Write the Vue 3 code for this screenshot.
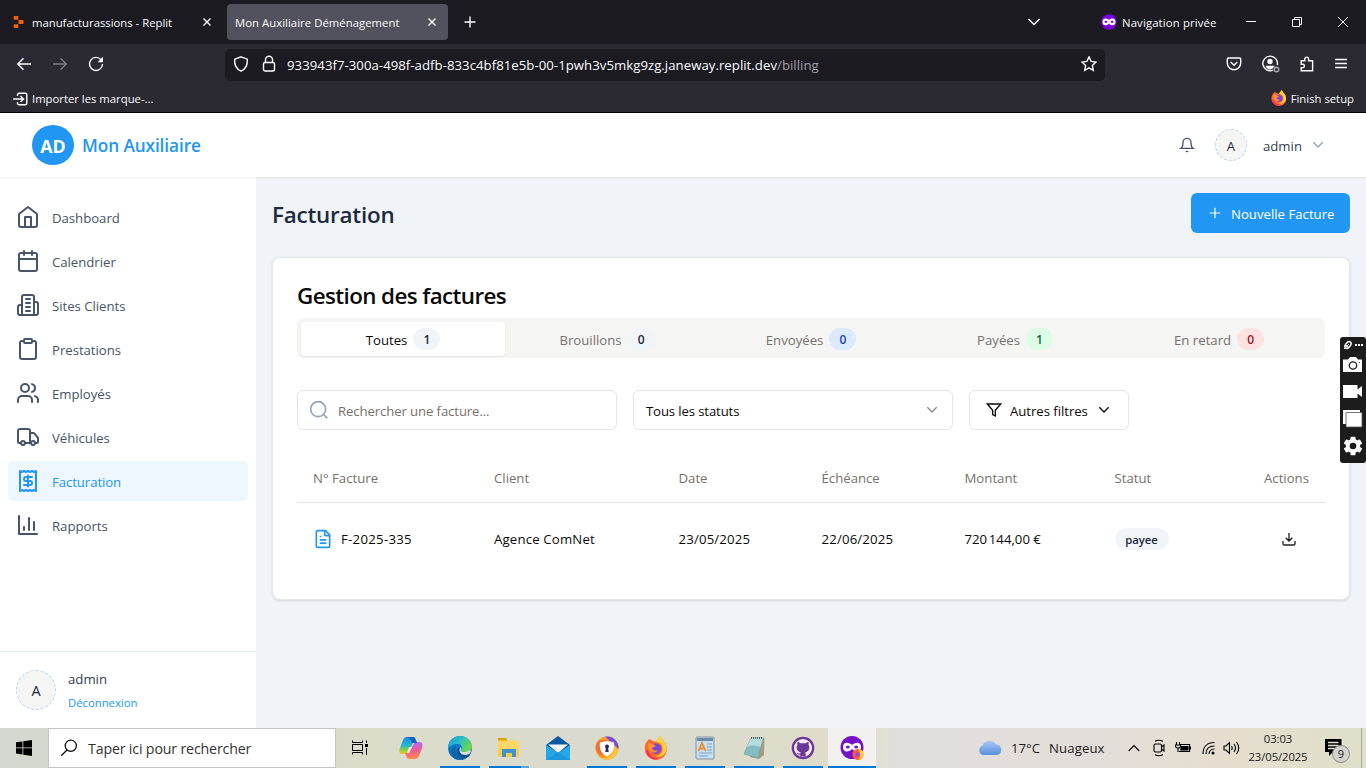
<script setup>
const nav = [
  { label: 'Dashboard', icon: ['m3 9 9-7 9 7v11a2 2 0 0 1-2 2H5a2 2 0 0 1-2-2z', 'M9 22V12h6v10'] },
  { label: 'Calendrier', icon: ['M5 4h14a2 2 0 0 1 2 2v14a2 2 0 0 1-2 2H5a2 2 0 0 1-2-2V6a2 2 0 0 1 2-2z', 'M16 2v4M8 2v4M3 10h18'] },
  { label: 'Sites Clients', icon: ['M6 22V4a2 2 0 0 1 2-2h8a2 2 0 0 1 2 2v18Z', 'M6 12H4a2 2 0 0 0-2 2v6a2 2 0 0 0 2 2h2', 'M18 9h2a2 2 0 0 1 2 2v9a2 2 0 0 1-2 2h-2', 'M10 6h4M10 10h4M10 14h4M10 18h4'] },
  { label: 'Prestations', icon: ['M9 2h6a1 1 0 0 1 1 1v2a1 1 0 0 1-1 1H9a1 1 0 0 1-1-1V3a1 1 0 0 1 1-1z', 'M16 4h2a2 2 0 0 1 2 2v14a2 2 0 0 1-2 2H6a2 2 0 0 1-2-2V6a2 2 0 0 1 2-2h2'] },
  { label: 'Employés', icon: ['M16 21v-2a4 4 0 0 0-4-4H6a4 4 0 0 0-4 4v2', 'M5 7a4 4 0 1 0 8 0a4 4 0 1 0-8 0', 'M22 21v-2a4 4 0 0 0-3-3.87', 'M16 3.13a4 4 0 0 1 0 7.75'] },
  { label: 'Véhicules', icon: ['M14 18V6a2 2 0 0 0-2-2H4a2 2 0 0 0-2 2v11a1 1 0 0 0 1 1h2', 'M15 18H9', 'M19 18h2a1 1 0 0 0 1-1v-3.65a1 1 0 0 0-.22-.624l-3.48-4.35A1 1 0 0 0 17.52 8H14', 'M5 18a2 2 0 1 0 4 0a2 2 0 1 0-4 0', 'M15 18a2 2 0 1 0 4 0a2 2 0 1 0-4 0'] },
  { label: 'Facturation', active: true, icon: ['M4 2v20l2-1 2 1 2-1 2 1 2-1 2 1 2-1 2 1V2l-2 1-2-1-2 1-2-1-2 1-2-1-2 1Z', 'M16 8h-6a2 2 0 1 0 0 4h4a2 2 0 1 1 0 4H8', 'M12 17.5v-11'] },
  { label: 'Rapports', icon: ['M3 3v18h18', 'M18 17V9M13 17V5M8 17v-3'] },
]
const tabs = [
  { label: 'Toutes', n: 1, tone: 'slate', on: true },
  { label: 'Brouillons', n: 0, tone: 'slate' },
  { label: 'Envoyées', n: 0, tone: 'blue' },
  { label: 'Payées', n: 1, tone: 'green' },
  { label: 'En retard', n: 0, tone: 'red' },
]
const columns = ['N° Facture', 'Client', 'Date', 'Échéance', 'Montant', 'Statut', 'Actions']
</script>

<template>
  <div class="screen">
    <header class="browser">
      <div class="tabstrip">
        <div class="btab first">
          <svg class="replit" width="12" height="12" viewBox="0 0 12 12"><path d="M1.500 0h3.800v3.800H1.500a.8.8 0 0 1-.8-.8V.8a.8.8 0 0 1 .8-.8zM5.500 4h4.200a.8.8 0 0 1 .8.8v2.400a.8.8 0 0 1-.8.8H5.500zM1.500 8.200h3.800V12H1.500a.8.8 0 0 1-.8-.8V9a.8.8 0 0 1 .8-.8z" /></svg>
          <span class="t-rep">manufacturassions - Replit</span>
          <svg class="x" width="10" height="10" viewBox="0 0 10 10"><path d="M1.500 1.500l7 7M8.500 1.500l-7 7" /></svg>
        </div>
        <div class="btab current">
          <span class="t-mon">Mon Auxiliaire Déménagement</span>
          <svg class="x" width="10" height="10" viewBox="0 0 10 10"><path d="M1.500 1.500l7 7M8.500 1.500l-7 7" /></svg>
        </div>
        <svg class="plus" width="12" height="12" viewBox="0 0 12 12"><path d="M6 .5v11M.5 6h11" /></svg>
        <div class="win">
          <svg class="chev" width="14" height="8" viewBox="0 0 14 8"><path d="M1.500 1L7 6.500 12.500 1" /></svg>
          <svg class="mask" width="16" height="16" viewBox="0 0 16 16"><circle cx="8" cy="8" r="7.800" fill="#7f00d6" /><path d="M1.500 7.700c0-4.500 5-3.200 6.500-1.800C9.500 4.500 14.500 3.200 14.500 7.700c0 4.800-5 4-6.500 1.700-1.500 2.300-6.500 3.100-6.500-1.700z" fill="#fff" /><ellipse cx="4.900" cy="7.800" rx="1.500" ry="1.100" fill="#7f00d6" /><ellipse cx="11.100" cy="7.800" rx="1.500" ry="1.100" fill="#7f00d6" /></svg>
          <span class="t-nav">Navigation privée</span>
          <svg class="wc" width="10" height="10" viewBox="0 0 10 10"><path d="M0 4.500h10" /></svg>
          <svg class="wc w2" width="10" height="10" viewBox="0 0 10 10"><path d="M.5 2.500h7v7h-7zM2.500 2.500v-2h7v7h-2" /></svg>
          <svg class="wc w3" width="10" height="10" viewBox="0 0 10 10"><path d="M0 0l10 10M10 0L0 10" /></svg>
        </div>
      </div>
      <div class="toolbar">
        <svg class="back" width="16" height="16" viewBox="0 0 16 16"><path d="M15 8H1.800M7.500 2.300L1.800 8l5.700 5.700" /></svg>
        <svg class="fwd" width="16" height="16" viewBox="0 0 16 16"><path d="M1 8h13.200M8.500 2.300L14.200 8l-5.700 5.700" /></svg>
        <svg class="reload" width="16" height="16" viewBox="0 0 16 16"><path d="M13.200 4A6.500 6.500 0 1 0 14.500 8" /><path d="M15 .8v5.400H9.600z" fill="#fbfbfe" stroke="none" /></svg>
        <div class="url">
          <svg width="16" height="16" viewBox="0 0 16 16"><path d="M8 .8l6.300 2.400c.4 5.500-1.600 9.800-6.300 12C3.300 13 1.300 8.700 1.700 3.200z" /></svg>
          <svg class="lock" width="14" height="18" viewBox="0 0 14 18"><path d="M3.500 7.500V4.700a3.500 3.500 0 0 1 7 0v2.800" /><rect x="1.500" y="7.500" width="11" height="8.500" rx="1.500" /></svg>
          <span class="addr">933943f7-300a-498f-adfb-833c4bf81e5b-00-1pwh3v5mkg9zg.janeway.replit.dev<i>/billing</i></span>
          <svg class="star" width="16" height="16" viewBox="0 0 16 16"><path d="M8 .9l2.100 4.500 4.900.6-3.600 3.400.9 4.900L8 11.900l-4.300 2.400.9-4.900L1 6l4.900-.6z" /></svg>
        </div>
        <div class="tools">
          <svg width="16" height="16" viewBox="0 0 16 16"><path d="M2.500 2h11a1.200 1.200 0 0 1 1.200 1.200V7a6.700 6.700 0 0 1-13.400 0V3.200A1.200 1.200 0 0 1 2.500 2z" /><path d="M4.700 6L8 9.200 11.300 6" /></svg>
          <svg width="19" height="18" viewBox="0 0 18 18"><path d="M11.500 15.200A7.300 7.300 0 1 1 15.800 10" /><circle cx="8.500" cy="6.500" r="2.700" fill="#fbfbfe" stroke="none" /><path d="M4 10.800h9c0 1-2 3.700-4.500 3.700S4 11.800 4 10.800z" fill="#fbfbfe" stroke="none" /><circle class="dot" cx="15" cy="14.500" r="2.200" /></svg>
          <svg width="16" height="16" viewBox="0 0 16 16"><path d="M2.200 4.700h3.600V3a1.900 1.900 0 0 1 3.800 0v1.700h4v10H2.200v-3h1.500a1.700 1.700 0 0 0 0-3.400H2.200z" /></svg>
          <svg width="14" height="16" viewBox="0 0 14 16"><path d="M1 3.500h12M1 7.500h12M1 11.500h12" /></svg>
        </div>
      </div>
      <div class="bookmarks">
        <svg class="imp" width="15" height="14" viewBox="0 0 15 14"><path d="M4.500 4V2.800A1.500 1.500 0 0 1 6 1.300h6.300a1.500 1.500 0 0 1 1.500 1.500v8.400a1.500 1.500 0 0 1-1.500 1.500H6a1.500 1.500 0 0 1-1.500-1.500V10M.2 7H10M7.500 4l3 3-3 3" /></svg>
        <span class="t-imp">Importer les marque-...</span>
        <svg class="ff" width="16" height="16" viewBox="0 0 24 24"><path d="M22 9c-.5-2-2-4-3.500-5-.5-2-2-3-3-4-.5 3-3 4-4 6L5 3 2 7C0 10 .5 16 3 19.500 8 26 18 25 21.500 18.500 23 16 23.300 12 22 9z" fill="#ff6a2b" /><path d="M18.500 4c-.5-2-2-3-3-4-.5 3-3 4-4 6 5 0 8 4 7 9-1 3-4 5-7 5 5 2 10-1 11-6 .5-4-1.500-8-4-10z" fill="#ffd43a" /><path d="M2 15c1 6 7 9.500 13 8-6-1-10-3-11-9z" fill="#f1246e" /><circle cx="12" cy="12.500" r="5.300" fill="#7b45dc" /><path d="M4 7l5 1 3 2-4 2c1 3 4 3 6 2-2 4-8 3-9.500-1z" fill="#ff912f" /></svg>
        <span class="t-fin">Finish setup</span>
      </div>
    </header>

    <div class="app">
      <header class="topbar">
        <div class="logo">AD</div>
        <span class="brand">Mon Auxiliaire</span>
        <div class="user">
          <svg class="bell" width="16" height="16" viewBox="0 0 24 24"><path d="M6 8a6 6 0 0 1 12 0c0 7 3 9 3 9H3s3-2 3-9" /><path d="M10.300 21a1.940 1.940 0 0 0 3.400 0" /></svg>
          <div class="avatar small">A</div>
          <span class="uname">admin</span>
          <svg class="down" width="16" height="16" viewBox="0 0 24 24"><path d="m5 8 7 7 7-7" /></svg>
        </div>
      </header>
      <div class="body">
        <aside>
          <nav>
            <a v-for="item in nav" :key="item.label" :class="{ active: item.active }">
              <svg width="24" height="24" viewBox="0 0 24 24"><path v-for="d in item.icon" :key="d" :d="d" /></svg>
              <span>{{ item.label }}</span>
            </a>
          </nav>
          <div class="account">
            <div class="avatar">A</div>
            <div class="who"><span>admin</span><a>Déconnexion</a></div>
          </div>
        </aside>
        <main>
          <div class="heading">
            <h1>Facturation</h1>
            <button><svg width="16" height="16" viewBox="0 0 24 24"><path d="M4 12h16M12 4v16" /></svg><span>Nouvelle Facture</span></button>
          </div>
          <section class="card">
            <h2>Gestion des factures</h2>
            <div class="tabs">
              <div v-for="t in tabs" :key="t.label" class="tab" :class="{ on: t.on }">
                <span>{{ t.label }}</span><b :class="t.tone">{{ t.n }}</b>
              </div>
            </div>
            <div class="filters">
              <div class="field search">
                <svg width="20" height="20" viewBox="0 0 24 24"><circle cx="11" cy="11" r="9" /><path d="m22 22-4.600-4.600" /></svg>
                <span>Rechercher une facture...</span>
              </div>
              <div class="field select">
                <span>Tous les statuts</span>
                <svg width="16" height="16" viewBox="0 0 24 24"><path d="m5 8 7 7 7-7" /></svg>
              </div>
              <div class="field more">
                <svg width="16" height="16" viewBox="0 0 24 24"><path d="M22 3H2l8 9.460V19l4 2v-8.540z" /></svg>
                <span>Autres filtres</span>
                <svg width="16" height="16" viewBox="0 0 24 24"><path d="m5 8 7 7 7-7" /></svg>
              </div>
            </div>
            <div class="row head"><span v-for="c in columns" :key="c">{{ c }}</span></div>
            <div class="row line">
              <span class="num"><svg width="20" height="20" viewBox="0 0 24 24"><path d="M15 2H6a2 2 0 0 0-2 2v16a2 2 0 0 0 2 2h12a2 2 0 0 0 2-2V7Z" /><path d="M14 2v4a2 2 0 0 0 2 2h4M10 9H8M16 13H8M16 17H8" /></svg>F-2025-335</span>
              <span>Agence ComNet</span>
              <span>23/05/2025</span>
              <span>22/06/2025</span>
              <span class="amount">720&#8239;144,00&nbsp;€</span>
              <span><b class="status">payee</b></span>
              <span class="act"><svg width="16" height="16" viewBox="0 0 24 24"><path d="M21 15v4a2 2 0 0 1-2 2H5a2 2 0 0 1-2-2v-4M7 10l5 5 5-5M12 15V3" /></svg></span>
            </div>
          </section>
        </main>
      </div>
    </div>

    <div class="capture">
      <svg width="26" height="126" viewBox="0 0 26 126">
        <g fill="none" stroke="#fff"><ellipse cx="8" cy="8" rx="2.300" ry="3.800" transform="rotate(40 8 8)" stroke-width="1.500" /><path d="M4 12l5-5M5 7.500l4 3" /></g>
        <path d="M15 7h2v2h-2zM18 7h2v2h-2zM21 7h2v2h-2z" fill="#fff" />
        <path d="M3 22.500h5l2-2.500h6l2 2.500h4V35H3z" fill="#fff" /><circle cx="13" cy="28.500" r="3.700" fill="#fff" stroke="#1c1c1c" stroke-width="1.300" /><path d="M19 25h1v1h-1z" fill="#333" />
        <path d="M3 48h14.500v4.500L22 49v11l-4.500-3.500V61H3z" fill="#fff" />
        <path d="M3 73h17v14H3z" fill="#fff" /><path d="M6 75.500h16V90H6z" fill="#fff" stroke="#555" stroke-width=".8" />
        <g transform="translate(13 109)" fill="#fff"><circle r="7.200" /><rect v-for="a in [0, 60, 120]" :key="a" x="-2.500" y="-9.300" width="5" height="18.600" :transform="`rotate(${a})`" rx=".8" /><circle r="3.300" fill="#1c1c1c" /></g>
      </svg>
    </div>

    <footer class="taskbar">
      <div class="start"><svg width="16" height="16" viewBox="0 0 16 16"><path d="M0 2.300L6.500 1.400v6.100H0zM7.300 1.300L16 0v7.500H7.300zM0 8.300h6.500v6.200L0 13.600zM7.300 8.300H16V16l-8.700-1.300z" /></svg></div>
      <div class="find">
        <svg width="18" height="18" viewBox="0 0 18 18"><circle cx="10.800" cy="6.800" r="5.600" /><path d="M7 11L1.200 16.800" /></svg>
        <span>Taper ici pour rechercher</span>
      </div>
      <div class="cell view"><svg width="18" height="18" viewBox="0 0 18 18"><path d="M1.500 1.500v2h10v-2M1.500 5.500h10v6h-10zM1.500 15.500v-2h10v2M15.500 1.500v2.500M15.500 9v7" fill="none" stroke="#000" stroke-width="1" /><path d="M14 5h3v3h-3z" fill="#000" /></svg></div>
      <div class="apps">
        <div class="cell">
          <svg width="24" height="24" viewBox="0 0 24 24"><defs><linearGradient id="ca" x1="0" y1="0" x2="0" y2="1"><stop stop-color="#138ae8" /><stop offset=".5" stop-color="#26b7ce" /><stop offset=".75" stop-color="#8acc4a" /><stop offset="1" stop-color="#f4ca22" /></linearGradient><linearGradient id="cb" x1="0" y1="0" x2="0" y2="1"><stop stop-color="#b76af2" /><stop offset=".5" stop-color="#ee5b93" /><stop offset="1" stop-color="#ff8a4b" /></linearGradient></defs><path d="M13 1l3 1 2 5h-4l-3 6-3 5H3c-3 0-3-3-2-6l3-8c1-2 2-3 4-3z" fill="url(#ca)" /><path d="M11 23l-3-1-2-5h4l3-6 3-5h4c4 0 4 3 3 6l-3 8c-1 2-2 3-4 3z" fill="url(#cb)" /><path d="M8 1h6c2 0 2 1 4 6h-5c-1-3-2-5-5-6z" fill="#1760c4" /><path d="M10 11h3l-3 6H8z" fill="#ecebe0" /></svg>
        </div>
        <div class="cell open">
          <svg width="26" height="26" viewBox="0 0 26 26"><defs><linearGradient id="ea" x1="0" y1="0" x2="1" y2=".4"><stop stop-color="#199bdc" /><stop offset=".5" stop-color="#28bccb" /><stop offset="1" stop-color="#68d653" /></linearGradient></defs><circle cx="13" cy="13" r="12" fill="#1077c7" /><path d="M1 12C2 5 7 1 13 1c7 0 12 5 12 10 0 4-3 6-7 6-3 0-4-1-4-2 2-2 1-6-3-6-5 0-9 2-10 5z" fill="url(#ea)" /><path d="M9 12c-2 7 3 12 10 11-6 4-13 1-15-4-1-5 2-8 5-7z" fill="#0d63ae" /><path d="M13 12c-3 3 0 9 9 7l1 1c-3 4-8 4-11 1-3-3-3-7 1-9z" fill="#124e94" /><path d="M14 12c1 3-1 3 0 4 2 2 6 1 9-1l1 1c-1 3-3 4-6 4-5 0-7-5-4-8z" fill="#ddddd4" /></svg>
        </div>
        <div class="cell open split">
          <svg width="24" height="22" viewBox="0 0 24 22"><path d="M1 1h8l2 3h-10z" fill="#dda300" /><path d="M1 3.500h21V20H1z" fill="#ffd767" /><path d="M1 12h21v8H1z" fill="#fbcb4a" /><path d="M5 12h14v8h-4v-4H9v4H5z" fill="#3e93cf" /></svg>
        </div>
        <div class="cell">
          <svg width="24" height="24" viewBox="0 0 24 24"><path d="M0 9L12 0l12 9v15H0z" fill="#0859a4" /><path d="M2 8.500h20L12 17z" fill="#f4f5f6" /><path d="M0 9l12 8 12-8v15H0z" fill="#27a6e5" /><path d="M0 24l12-8 12 8z" fill="#1b97dc" /></svg>
        </div>
        <div class="cell open">
          <svg width="24" height="24" viewBox="0 0 24 24"><circle cx="12" cy="12" r="11.500" fill="#f69b22" /><path d="M10 .6A11.500 11.500 0 0 1 23.500 13L18 8z" fill="#7550dc" /><path d="M1 9C4 2 10 4 19 6 10 5 4 9 8 20 2 18 0 13 1 9z" fill="#f0703c" /><path d="M23 14c-1 8-10 12-17 8 7 1 13-3 14-12z" fill="#ffc536" /><path d="M5 6.500l7-1.500 7 1.500c1 6-1 11-7 14-6-3-8-8-7-14z" fill="#fff" /><circle cx="12" cy="10.500" r="2" fill="#292a59" /><path d="M11 11h2l.7 5h-3.400z" fill="#292a59" /></svg>
        </div>
        <div class="cell open">
          <svg width="24" height="24" viewBox="0 0 24 24"><path d="M22 9c-.5-2-2-4-3.500-5-.5-2-2-3-3-4-.5 3-3 4-4 6L5 3 2 7C0 10 .5 16 3 19.500 8 26 18 25 21.500 18.500 23 16 23.300 12 22 9z" fill="#ff6a2b" /><path d="M18.500 4c-.5-2-2-3-3-4-.5 3-3 4-4 6 5 0 8 4 7 9-1 3-4 5-7 5 5 2 10-1 11-6 .5-4-1.500-8-4-10z" fill="#ffd43a" /><path d="M2 15c1 6 7 9.500 13 8-6-1-10-3-11-9z" fill="#f1246e" /><circle cx="12" cy="12.500" r="5.300" fill="#7b45dc" /><path d="M4 7l5 1 3 2-4 2c1 3 4 3 6 2-2 4-8 3-9.500-1z" fill="#ff912f" /></svg>
        </div>
        <div class="cell open">
          <svg width="20" height="24" viewBox="0 0 20 24"><rect x="1" y="1" width="18" height="22" rx="1" fill="#c6def2" stroke="#8195a6" /><path d="M2 2h16v3H2z" fill="#6f8ba4" /><path d="M12 8h5M12 11h5M12 14h5M4 17h13M4 20h9" stroke="#7fa3c4" /><path d="M3.500 15L7 7l3.500 8M5 12.500h4.500" fill="none" stroke="#f18b28" stroke-width="1.800" /></svg>
        </div>
        <div class="cell open">
          <svg width="24" height="24" viewBox="0 0 24 24"><path d="M10 2l12.500-.5L22 19l-5 4-9-2z" fill="#a99c7c" /><path d="M9 2h12l-5 20-14-4z" fill="#83bcc4" stroke="#6d9aa2" stroke-width=".6" /><path d="M9 2h12l-2.500 9C14 9 9 9 5 11z" fill="#b4dcdd" /><path d="M9 2h12" stroke="#4c676c" stroke-width="1.800" stroke-dasharray="1 1" /></svg>
        </div>
        <div class="cell open">
          <svg width="24" height="24" viewBox="0 0 24 24"><circle cx="12" cy="12" r="11.300" fill="#6d3798" /><circle cx="12" cy="12" r="9" fill="#f6edf9" /><path d="M6.500 6c1 0 2 .5 3 1.200h5C15.500 6.500 16.500 6 17.500 6c.3 1 .3 2 0 2.800 2 3 .5 7-3.500 7.500.8.800.8 1.700.8 4.300H9.200v-2c-2 .3-3-.8-3.700-2 1.500 0 1.500 1.200 3.700.8 0-.5.300-.8.800-1.100-4-.5-5.500-4.500-3.500-7.500-.3-.8-.3-1.800 0-2.800z" fill="#6d3798" /></svg>
        </div>
        <div class="cell open now">
          <svg width="24" height="26" viewBox="0 0 24 26"><circle cx="12" cy="12.500" r="11.500" fill="#7512c9" /><path d="M3 12c0-6 6.500-4.500 9-2 2.500-2.500 9-4 9 2s-6.500 5-9 2c-2.500 3-9 4-9-2z" fill="#fff" /><ellipse cx="7.800" cy="12" rx="2" ry="1.500" fill="#7512c9" /><ellipse cx="16.200" cy="12" rx="2" ry="1.500" fill="#7512c9" /><circle cx="18" cy="19.500" r="5.500" fill="#ff5a3a" /><path d="M18 13.500c4 1 6.500 3.500 5.500 7.500-1 2-3 3.500-5.500 3.500 3-3 3-6 0-11z" fill="#ffc93a" /><circle cx="17.500" cy="19.500" r="2.300" fill="#9a4bd0" /></svg>
        </div>
      </div>
      <div class="tray">
        <svg class="cloud" width="26" height="18" viewBox="0 0 26 18"><defs><linearGradient id="cl" x1="0" y1="0" x2="0" y2="1"><stop stop-color="#a6c8f5" /><stop offset="1" stop-color="#5a8fe0" /></linearGradient></defs><path d="M6 16a5 5 0 0 1-.5-9.500A7.500 7.500 0 0 1 19 5.500a5.300 5.300 0 0 1 1 10.500z" fill="url(#cl)" /></svg>
        <span class="temp">17°C</span><span class="meteo">Nuageux</span>
        <svg class="up" width="12" height="8" viewBox="0 0 12 8"><path d="M.7 7L6 1.500 11.300 7" /></svg>
        <svg class="meet" width="12" height="18" viewBox="0 0 12 18"><path d="M2 2.200Q6 .3 10 2.200M2 15.800q4 1.900 8 0" /><rect x="1" y="5" width="7.500" height="8" rx="1.500" /><path d="M8.500 8l2.500-2v6L8.500 10" /></svg>
        <svg class="batt" width="16" height="14" viewBox="0 0 16 14"><path d="M5 3.500h9.500v7H4M1.500 1v3M4.500 1v3M.5 4h5v1.500a2 2 0 0 1-2 1.500h-1a2 2 0 0 1-2-1.500zM3 7v4" /><path d="M6 5h7.500v4.500H5zM15 5.500h1v3h-1z" fill="#000" stroke="none" /></svg>
        <svg class="wifi" width="13" height="14" viewBox="0 0 13 14"><path d="M1 13C1 6 5 1.500 12.500 1.500M4 13c0-5 3-8 8.500-8M7 13c0-3 2-5 5.500-5" /><circle cx="11" cy="12" r="1.500" fill="#000" stroke="none" /></svg>
        <svg class="vol" width="17" height="14" viewBox="0 0 17 14"><path d="M1 5v4h2l3.500 3.500v-11L3 5zM8.500 5q1.500 2 0 4M11 3q3 4 0 8M13.500 1q4.500 6 0 12" /></svg>
        <div class="clock"><span>03:03</span><span>23/05/2025</span></div>
        <div class="notif">
          <svg width="17" height="17" viewBox="0 0 17 17"><path d="M0 0h16.500v13H8l-4 4v-4H0z" /><path d="M3 3.500h10.500M3 6.500h10.500M3 9.500h7" stroke="#e2e0d2" stroke-width="1.300" /></svg>
          <em>9</em>
        </div>
        <div class="peek"></div>
      </div>
    </footer>
  </div>
</template>

<style>
html, body { margin: 0; overflow: hidden; }
</style>

<style scoped>
* { box-sizing: border-box; }
.screen { width: 1366px; height: 768px; position: relative; display: flex; flex-direction: column; overflow: hidden; font-family: "Open Sans", "Noto Sans", sans-serif; font-size: 13.2px; line-height: 20px; background: #fff; }
svg { display: block; flex: none; fill: none; }

span { white-space: nowrap; }

.browser { height: 113px; background: #2b2a33; border-bottom: 1px solid #050506; color: #fbfbfe; font-size: 11.3px; }
.browser svg { stroke: #fbfbfe; stroke-width: 1.4; }
.browser .dot { stroke: #aaa9b3; }
.tabstrip { height: 44px; background: #1c1b22; display: flex; align-items: center; }
.btab { display: flex; align-items: center; }
.btab span, .t-nav { padding-top: 2px; }
.first { width: 227px; padding: 0 15px 0 13px; }
.browser .replit { stroke: none; fill: #f26207; }
.first span { margin-left: 7px; }
.first .x, .current .x { margin-left: auto; }
.current { width: 221px; height: 36px; padding: 0 11px 0 8px; background: #52515e; border-radius: 4px; }
.t-mon { letter-spacing: .05px; }
.plus { margin-left: 16px; }
.win { margin-left: auto; display: flex; align-items: center; padding-right: 18px; }
.win .mask { stroke: none; margin-left: 60px; }
.t-nav { margin-left: 5px; width: 124px; letter-spacing: .15px; }
.browser .wc { stroke-width: 1; }
.w2, .w3 { margin-left: 36px; }
.toolbar { height: 41px; display: flex; align-items: center; padding-left: 16px; }
.toolbar > svg { margin-top: -1px; }
.fwd { margin-left: 20px; opacity: .4; }
.reload { margin-left: 20px; }
.url { margin-left: 121px; width: 880px; height: 32px; background: #1c1b22; border-radius: 5px; display: flex; align-items: center; padding: 0 8px; font-size: 13.2px; }
.url svg { margin-top: -1px; }
.lock { margin-left: 13px; }
.addr { margin-left: 11px; letter-spacing: .035px; }
.addr i { font-style: normal; color: #a09fa8; }
.star { margin-left: auto; }
.tools { margin-left: 121px; margin-top: -1px; display: flex; align-items: center; gap: 19px; }
.bookmarks { height: 27px; display: flex; align-items: center; padding: 0 12px 0 13px; }
.t-imp { margin-left: 4px; }
.bookmarks .ff { margin-left: auto; stroke: none; margin-top: -1px; }
.t-fin { margin-left: 4px; }

.app { height: 615px; display: flex; flex-direction: column; background: #f0f4f9; }
.topbar { position: relative; height: 64px; background: #fff; display: flex; align-items: center; padding: 0 40px 0 32px; box-shadow: 0 1px 2px rgba(0, 0, 0, .07); }
.logo { width: 42px; height: 40px; border-radius: 50%; background: #2196f3; color: #fff; font-weight: 700; font-size: 17.800px; display: flex; align-items: center; justify-content: center; padding-top: 1px; }
.brand { margin-left: 8px; padding-top: 2px; color: #2196f3; font-weight: 600; font-size: 17.200px; letter-spacing: -.08px; }
.user { margin-left: auto; display: flex; align-items: center; }
.bell { stroke: #475569; stroke-width: 2; }
.avatar { width: 40px; height: 40px; border-radius: 50%; background: #f5f5f4; border: 1px dashed #b5d9f8; color: #1f2937; display: flex; align-items: center; justify-content: center; font-size: 14.5px; padding-top: 2px; flex: none; }
.small { width: 32px; height: 32px; margin-left: 20px; font-size: 13.2px; }
.uname { margin-left: 16px; color: #334155; padding-top: 2px; }
.down { margin-left: 8px; stroke: #94a3b8; stroke-width: 2; }
.body { flex: 1; display: flex; min-height: 0; }
aside { width: 256px; background: #fff; display: flex; flex-direction: column; justify-content: space-between; }
nav { padding: 20px 8px 0; display: flex; flex-direction: column; gap: 4px; }
nav a { height: 40px; padding: 0 8px; border-radius: 6px; display: flex; align-items: center; color: #475569; letter-spacing: -.03px; }
nav svg { stroke: currentColor; stroke-width: 2; stroke-linecap: round; stroke-linejoin: round; }
nav span { margin-left: 12px; padding-top: 2px; }
nav .active { background: #eef6ff; color: #2196f3; letter-spacing: -.08px; }
.account { height: 77px; border-top: 1px solid #e2e8f0; display: flex; align-items: center; padding: 0 16px; }
.who { margin-left: 12px; display: flex; flex-direction: column; color: #334155; padding-top: 1px; gap: 4px; }
.who a { color: #2196f3; font-size: 11.3px; }
main { flex: 1; padding: 16px; }
.heading { height: 40px; display: flex; align-items: center; justify-content: space-between; }
h1 { margin: 0; padding-top: 4px; font-size: 22.400px; font-weight: 600; color: #1e293b; line-height: 32px; letter-spacing: -.2px; }
button { width: 159px; height: 40px; border: 0; border-radius: 6px; background: #2196f3; color: #fff; font: inherit; display: flex; align-items: center; padding: 0 16px; }
button svg { stroke: #fff; stroke-width: 1.8; }
button span { margin-left: 8px; padding-top: 2px; }
.card { margin-top: 24px; height: 343px; background: #fff; border: 1px solid #e5e7eb; border-radius: 8px; box-shadow: 0 1px 3px rgba(0, 0, 0, .12); padding: 24px; }
h2 { margin: 0; font-size: 22.400px; font-weight: 600; line-height: 28px; letter-spacing: -.6px; color: #0c0a09; }
.tabs { margin-top: 8px; height: 40px; border-radius: 6px; background: #f5f5f4; padding: 4px; display: grid; grid-template-columns: repeat(5, 1fr); color: #78716c; }
.tab { display: flex; align-items: center; justify-content: center; border-radius: 4px; height: 34px; }
.tab span { padding-top: 2px; }
.on { background: #fff; color: #0c0a09; box-shadow: 0 1px 2px rgba(0, 0, 0, .08); }
.tab b { margin-left: 6px; height: 22px; min-width: 26px; padding: 0 10px; border-radius: 11px; font-size: 12px; font-weight: 600; line-height: 23px; text-align: center; }
.slate { background: #f1f5f9; color: #1e293b; }
.blue { background: #dbeafe; color: #1e40af; }
.green { background: #dcfce7; color: #166534; }
.red { background: #fee2e2; color: #991b1b; }
.filters { margin-top: 32px; display: flex; gap: 16px; }
.field { height: 40px; border: 1px solid #e5e5e5; border-radius: 6px; display: flex; align-items: center; color: #0c0a09; }
.field span { padding-top: 2px; }
.search { width: 320px; padding-left: 11px; color: #78716c; letter-spacing: -.12px; }
.search svg { stroke: #94a3b8; stroke-width: 2; }
.search span { margin-left: 9px; }
.select { width: 320px; padding: 0 12px; justify-content: space-between; letter-spacing: -.14px; }
.select svg { stroke: #8a8a8a; stroke-width: 2; }
.more { width: 160px; padding-left: 16px; letter-spacing: -.05px; }
.more svg { stroke: #0c0a09; stroke-width: 2; }
.more span { margin: 0 8px; }
.row { display: grid; grid-template-columns: 181px 184.500px 143px 143px 150px 75px 1fr; align-items: center; }
.row > span { padding-left: 16px; }
.row > span:last-child { justify-self: end; padding-right: 16px; }
.head { margin-top: 24px; height: 49px; border-bottom: 1px solid #e5e5e5; color: #78716c; }
.line { height: 72px; color: #0c0a09; letter-spacing: .17px; }
.amount { letter-spacing: .1px; }
.num { display: flex; align-items: center; letter-spacing: .28px; }
.num svg { stroke: #2196f3; stroke-width: 2; margin-right: 8px; }
.status { display: block; width: 54px; height: 22px; border-radius: 11px; background: #f1f5f9; color: #1e293b; font-size: 11.300px; line-height: 23px; font-weight: 600; text-align: center; letter-spacing: 0; }
.row > span.act:last-child { padding-right: 28px; }
.act svg { stroke: #222; stroke-width: 2; }

.capture { position: absolute; right: 0; top: 337px; width: 26px; height: 126px; border-radius: 3px; background: #1c1c1c; }

.taskbar { height: 40px; display: flex; background: linear-gradient(90deg, #d4d8d0 0, #dcdccb 27%, #dadbcf 45%, #dfdcca 60%, #e2dedb 66%, #e4deda 80%, #e5decf 90%, #dfdfca 100%); color: #1a1a1a; }
.start { width: 48px; display: flex; align-items: center; justify-content: center; }
.start svg { fill: #000; }
.find { width: 288px; background: #fff; border: 1px solid #c4c5c0; display: flex; align-items: center; padding-left: 11px; font-size: 14.200px; letter-spacing: -.16px; color: #333; }
.find svg { stroke: #111; stroke-width: 1.3; }
.find span { margin-left: 10px; padding-top: 1px; }
.cell { width: 48px; height: 40px; display: flex; align-items: center; justify-content: center; flex: none; }
.apps { display: flex; gap: 1px; margin-left: 3px; }
.open { background: linear-gradient(#0078d7, #0078d7) center bottom / 40px 2px no-repeat; }
.split { background: linear-gradient(90deg, #0078d7 32px, #5ea5df 32px) center bottom / 40px 2px no-repeat; }
.now { background: linear-gradient(#0078d7, #0078d7) center bottom / 48px 2px no-repeat, #f3f1ed; }
.tray { margin-left: auto; display: flex; align-items: center; }
.tray svg { stroke: #000; stroke-width: 1.100; }
.tray .cloud { stroke: none; }
.temp { margin-left: 8px; width: 30px; }
.meteo { margin-left: 8px; width: 56px; letter-spacing: .1px; }
.up { margin-left: 23px; }
.meet { margin-left: 13px; }
.batt { margin-left: 10px; }
.wifi { margin-left: 11px; }
.vol { margin-left: 8px; }
.clock { margin-left: 8px; width: 60px; display: flex; flex-direction: column; align-items: center; font-size: 11.300px; line-height: 18px; letter-spacing: -.1px; }
.notif { position: relative; margin-left: 17px; width: 24px; height: 24px; padding-top: 3px; }
.notif > svg { fill: #000; stroke: none; }
.notif em { position: absolute; left: 7px; top: 9px; width: 18px; height: 18px; border-radius: 50%; background: #d3d3ce; border: 1px solid #8b8b88; font-style: normal; font-size: 11px; line-height: 16px; text-align: center; }
.peek { width: 5px; height: 40px; margin-left: 12px; border-left: 1px solid #a9a997; }
</style>
